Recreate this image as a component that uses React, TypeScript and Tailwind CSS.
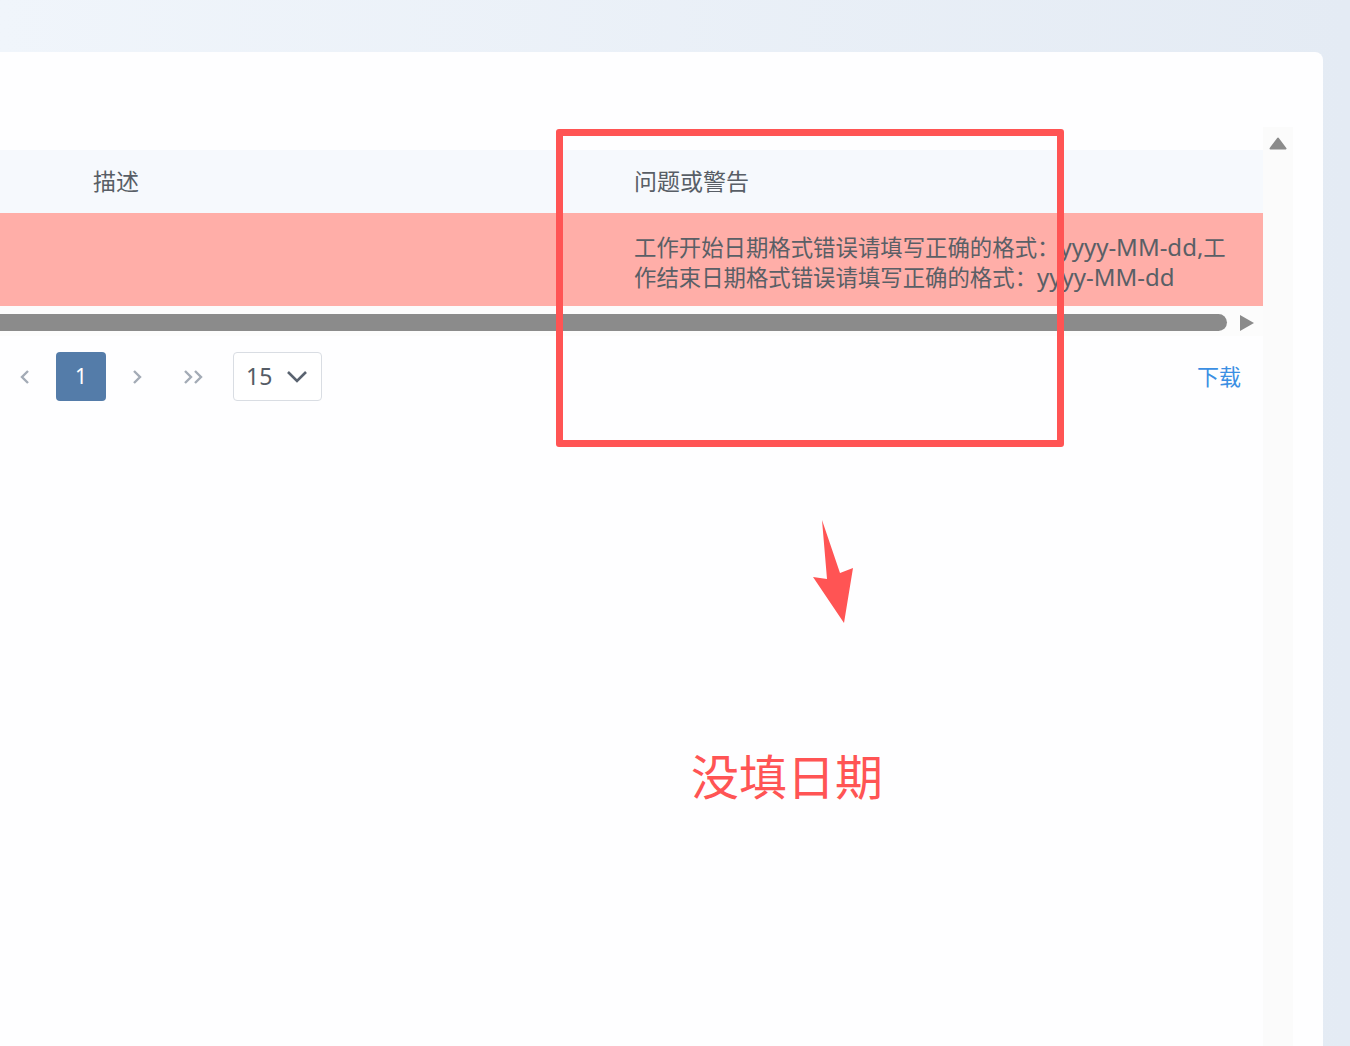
import React from 'react';

const font = { fontFamily: '"Noto Sans", "Noto Sans CJK SC", sans-serif' };

const ChevronLeft = () => (
  <svg width="14" height="20" viewBox="0 0 14 20" fill="none" stroke="#a3abb6" strokeWidth="2.4">
    <path d="M10 4 L4 10 L10 16" />
  </svg>
);

const ChevronRight = () => (
  <svg width="14" height="20" viewBox="0 0 14 20" fill="none" stroke="#a3abb6" strokeWidth="2.4">
    <path d="M4 4 L10 10 L4 16" />
  </svg>
);

const DoubleRight = () => (
  <svg width="24" height="20" viewBox="0 0 24 20" fill="none" stroke="#a3abb6" strokeWidth="2.4">
    <path d="M3 4 L9 10 L3 16" />
    <path d="M13 4 L19 10 L13 16" />
  </svg>
);

const App: React.FC = () => {
  return (
    <div
      className="relative w-[1350px] h-[1046px] overflow-hidden bg-gradient-to-r from-[#f0f5fb] to-[#e4ebf4]"
      style={font}
    >
      <div className="mt-[52px] w-[1323px] h-[994px] bg-[#fefeff] rounded-tr-lg flex">
        {/* table area */}
        <div className="w-[1263px] pt-[98px]">
          <div className="h-[63px] bg-[#f6f9fd] flex items-center text-[23px] text-[#585e66]">
            <div className="w-[614px] pl-[93px]">描述</div>
            <div className="flex-1 pl-[20px]">问题或警告</div>
          </div>
          <div className="h-[93px] bg-[#ffaea8] flex items-center text-[22.4px] leading-[30px] text-[#5a5f66]">
            <div className="w-[614px]" />
            <div className="flex-1 pl-[20px] pt-[7px]">
              工作开始日期格式错误请填写正确的格式：<span className="text-[24px] leading-none">yyyy-MM-dd,</span>工
              <br />
              作结束日期格式错误请填写正确的格式：<span className="text-[24px] leading-none">yyyy-MM-dd</span>
            </div>
          </div>
          <div className="h-[30px] bg-[#fcfcfc] flex items-start pt-[8px]">
            <div className="w-[1227px] h-[17px] bg-[#8b8b8b] rounded-r-full" />
            <div className="ml-[13px] w-0 h-0 border-y-[8px] border-y-transparent border-l-[14px] border-l-[#8b8b8b] mt-[1px]" />
          </div>
          <div className="flex items-center h-[49px] mt-[16px] pl-[18px] pr-[22px]">
            <ChevronLeft />
            <div className="ml-[24px] w-[50px] h-[49px] rounded bg-[#547ca9] text-white text-[21px] flex items-center justify-center">
              1
            </div>
            <div className="ml-[24px]"><ChevronRight /></div>
            <div className="ml-[38px]"><DoubleRight /></div>
            <div className="ml-[27px] w-[89px] h-[49px] rounded border border-[#d9dde3] bg-white flex items-center pl-[12px] text-[23px] text-[#555c66]">
              15
              <svg className="ml-[14px]" width="22" height="14" viewBox="0 0 22 14" fill="none" stroke="#5a6370" strokeWidth="2.6">
                <path d="M2 2 L11 11 L20 2" />
              </svg>
            </div>
            <div className="flex-1" />
            <a className="text-[22px] text-[#3b8fe3] cursor-pointer">下载</a>
          </div>
        </div>
        {/* vertical scrollbar */}
        <div className="w-[30px] mt-[75px] bg-[#fbfbfb] flex justify-center pt-[10px]">
          <svg width="18" height="13" viewBox="0 0 18 13">
            <path d="M9 1.5 L16.5 11.5 H1.5 Z" fill="#8b8b8b" stroke="#8b8b8b" strokeWidth="2" strokeLinejoin="round" />
          </svg>
        </div>
      </div>

      {/* annotation */}
      <div className="absolute left-[556px] top-[129px] w-[508px] h-[318px] border-[7px] border-[#ff5454] rounded-[3px]" />
      <svg className="absolute left-0 top-0" width="1350" height="1046" viewBox="0 0 1350 1046">
        <polygon points="822,520 840,573 853,568 844,623 813,577 827,579" fill="#ff5454" />
      </svg>
      <div className="absolute left-[691px] top-[744px] text-[48px] leading-[66px] text-[#ff5454]">没填日期</div>
    </div>
  );
};

export default App;
